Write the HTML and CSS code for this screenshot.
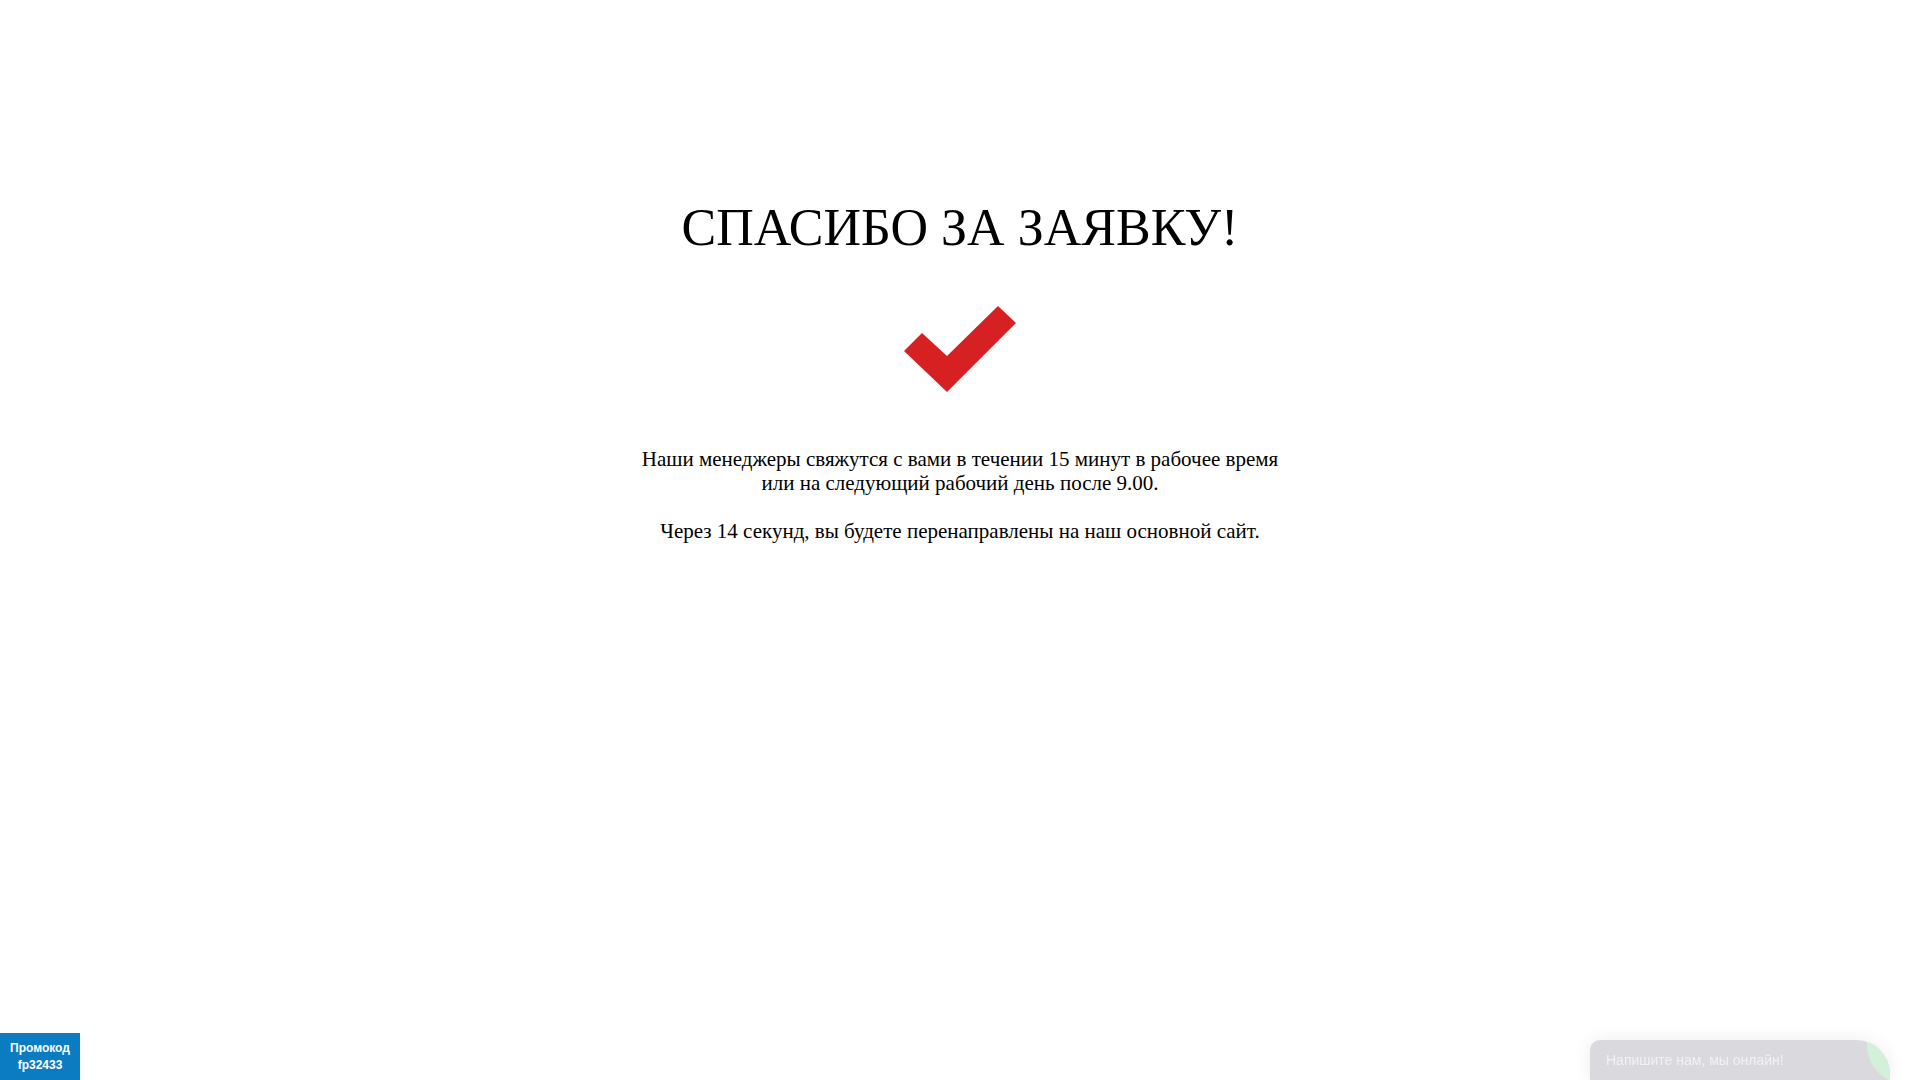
FILE: index.html
```html
<!DOCTYPE html>
<html lang="ru">
<head>
<meta charset="utf-8">
<title>Спасибо за заявку</title>
<link rel="stylesheet" href="styles.css">
</head>
<body>
<main class="thanks">
  <h1 class="thanks-title">СПАСИБО ЗА ЗАЯВКУ!</h1>
  <svg class="thanks-check" width="112" height="86" viewBox="0 0 112 86" aria-hidden="true">
    <polygon points="0,45 18,27 43,50 94,0 112,17 43,86" fill="#d62021"/>
  </svg>
  <p class="thanks-text">Наши менеджеры свяжутся с вами в течении 15 минут в рабочее время<br>или на следующий рабочий день после 9.00.</p>
  <p class="thanks-text thanks-redirect">Через 14 секунд, вы будете перенаправлены на наш основной сайт.</p>
</main>
<div class="promo">Промокод<br>fp32433</div>
<div class="chat">
  <span class="chat-label">Напишите нам, мы онлайн!</span>
  <span class="chat-dot"></span>
</div>
</body>
</html>
```
FILE: styles.css
```css
html, body {
  margin: 0;
  padding: 0;
  background: #ffffff;
}
body {
  font-family: "Liberation Serif", "Times New Roman", serif;
  color: #000;
  min-height: 1080px;
}
.thanks {
  display: flex;
  flex-direction: column;
  align-items: center;
  padding-top: 198px;
  text-align: center;
}
.thanks-title {
  margin: 0;
  font-size: 52px;
  font-weight: normal;
  line-height: 60px;
}
.thanks-check {
  display: block;
  margin-top: 48px;
}
.thanks-text {
  margin: 55px 0 0;
  font-size: 21px;
  line-height: 24px;
}
.thanks-redirect {
  margin-top: 24px;
}
.promo {
  position: fixed;
  left: 0;
  bottom: 0;
  width: 80px;
  height: 47px;
  background: #0b7cc1;
  color: #fff;
  font-family: "Liberation Sans", Arial, sans-serif;
  font-weight: bold;
  font-size: 12px;
  line-height: 17px;
  display: flex;
  align-items: center;
  justify-content: center;
  text-align: center;
}
.chat {
  position: fixed;
  right: 30px;
  bottom: 0;
  width: 300px;
  height: 40px;
  background: #d9d9de;
  border-radius: 10px 34px 0 0;
  box-shadow: 0 0 18px rgba(0, 0, 0, 0.08);
  overflow: hidden;
  font-family: "Liberation Sans", Arial, sans-serif;
}
.chat-label {
  position: absolute;
  left: 16px;
  top: 12px;
  font-size: 14px;
  line-height: 16px;
  color: #f2f2f4;
}
.chat-dot {
  position: absolute;
  left: 277px;
  top: -34px;
  width: 78px;
  height: 78px;
  border-radius: 50%;
  background: #d3f1d8;
}
```
